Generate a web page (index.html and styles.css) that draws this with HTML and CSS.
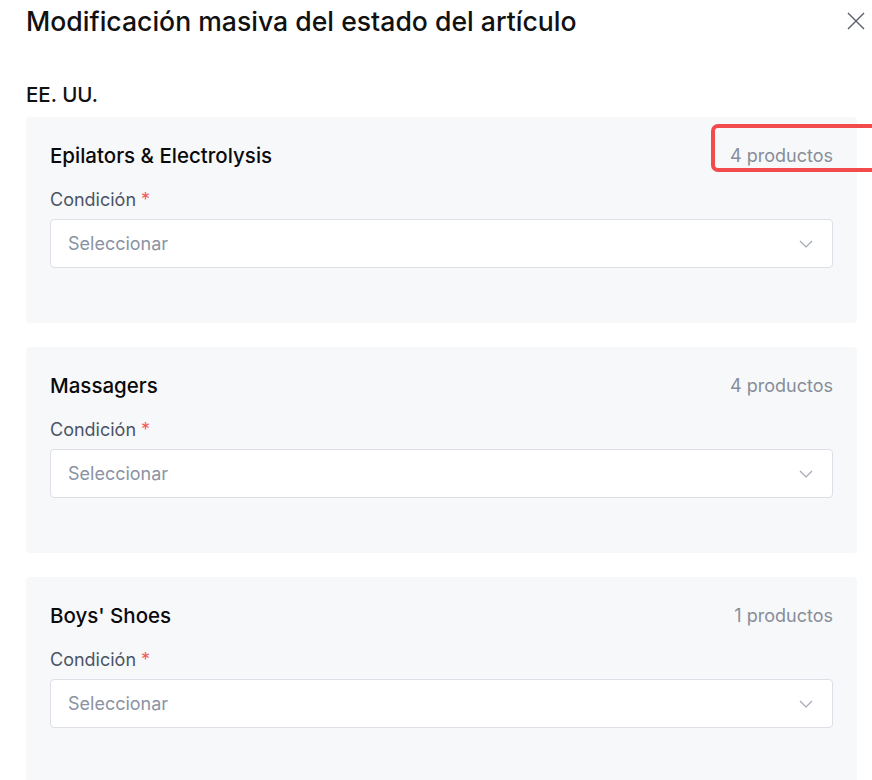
FILE: index.html
```html
<!DOCTYPE html>
<html>
<head>
    <meta http-equiv="Content-Type" content="text/html; charset=UTF-8">
    <link rel="stylesheet" href="styles.css">
</head>
<body>
    <div class="modal">
        <div class="modal-header">
            <h1 class="modal-title">Modificación masiva del estado del artículo</h1>
            <span class="close">
                <svg width="20" height="20" viewBox="0 0 20 20"><path d="M2 2L18 18M18 2L2 18" stroke="#595f6b" stroke-width="1.4" fill="none"/></svg>
            </span>
        </div>

        <div class="region-name">EE. UU.</div>

        <div class="card">
            <div class="card-head">
                <span class="cat-name">Epilators &amp; Electrolysis</span>
                <span class="count">4 productos</span>
                <span class="mark"></span>
            </div>
            <div class="label">Condición <span class="req">*</span></div>
            <div class="select">
                <span class="placeholder">Seleccionar</span>
                <svg width="14" height="8" viewBox="0 0 14 8"><path d="M1 1L7 7L13 1" stroke="#a3a8b3" stroke-width="1.2" fill="none"/></svg>
            </div>
        </div>

        <div class="card">
            <div class="card-head">
                <span class="cat-name">Massagers</span>
                <span class="count">4 productos</span>
            </div>
            <div class="label">Condición <span class="req">*</span></div>
            <div class="select">
                <span class="placeholder">Seleccionar</span>
                <svg width="14" height="8" viewBox="0 0 14 8"><path d="M1 1L7 7L13 1" stroke="#a3a8b3" stroke-width="1.2" fill="none"/></svg>
            </div>
        </div>

        <div class="card">
            <div class="card-head">
                <span class="cat-name">Boys' Shoes</span>
                <span class="count">1 productos</span>
            </div>
            <div class="label">Condición <span class="req">*</span></div>
            <div class="select">
                <span class="placeholder">Seleccionar</span>
                <svg width="14" height="8" viewBox="0 0 14 8"><path d="M1 1L7 7L13 1" stroke="#a3a8b3" stroke-width="1.2" fill="none"/></svg>
            </div>
        </div>
    </div>
</body>
</html>
```

FILE: styles.css
```css
html, body {
    margin: 0;
    padding: 0;
    background: #ffffff;
    overflow: hidden;
}

body {
    font-family: Inter, "Noto Sans", sans-serif;
    color: #111111;
}

.modal {
    padding: 2px 6px 0 26px;
}

.modal-header {
    display: flex;
    justify-content: space-between;
    align-items: center;
    height: 38px;
}

.modal-title {
    margin: 0;
    font-size: 26.6px;
    font-weight: 500;
    line-height: 38px;
}

.close {
    display: flex;
}

.region-name {
    margin-top: 41px;
    font-size: 20.5px;
    font-weight: 500;
    line-height: 28px;
}

.card {
    background: #f7f8fa;
    border-radius: 4px;
    margin: 8px 9px 24px 0;
    padding: 24px 24px 55px 24px;
}

.card-head {
    position: relative;
    display: flex;
    justify-content: space-between;
    align-items: center;
    height: 28px;
}

.cat-name {
    font-size: 20.5px;
    font-weight: 500;
    color: #0a0a0a;
}

.count {
    font-size: 18px;
    color: #878d99;
}

.mark {
    position: absolute;
    left: 661px;
    top: -17px;
    width: 170px;
    height: 40px;
    border: 4px solid #f24b4b;
    border-radius: 7px;
}

.label {
    margin-top: 18px;
    font-size: 18px;
    line-height: 26px;
    color: #4b5466;
}

.req {
    color: #f25a5a;
}

.select {
    margin-top: 6px;
    height: 47px;
    background: #ffffff;
    border: 1px solid #dcdfe6;
    border-radius: 4px;
    display: flex;
    justify-content: space-between;
    align-items: center;
    padding: 0 19px 0 17px;
}

.placeholder {
    font-size: 18px;
    color: #8a93a3;
}
```
